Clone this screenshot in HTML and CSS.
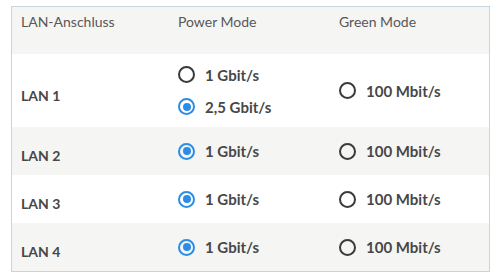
FILE: index.html
```html
<!DOCTYPE html>
<html lang="de">
<head>
    <meta charset="UTF-8">
    <title>LAN-Anschluss</title>
    <link rel="stylesheet" href="styles.css">
</head>
<body>

    <!-- LAN Port Table -->
    <div class="lan-table">
        <div class="row head">
            <div class="cell">LAN-Anschluss</div>
            <div class="cell">Power Mode</div>
            <div class="cell">Green Mode</div>
        </div>

        <div class="row tall">
            <div class="cell name">LAN 1</div>
            <div class="cell options">
                <label class="radio"><span class="dot"></span>1 Gbit/s</label>
                <label class="radio"><span class="dot checked"></span>2,5 Gbit/s</label>
            </div>
            <div class="cell options">
                <label class="radio"><span class="dot"></span>100 Mbit/s</label>
            </div>
        </div>

        <div class="row shaded">
            <div class="cell name">LAN 2</div>
            <div class="cell options">
                <label class="radio"><span class="dot checked"></span>1 Gbit/s</label>
            </div>
            <div class="cell options">
                <label class="radio"><span class="dot"></span>100 Mbit/s</label>
            </div>
        </div>

        <div class="row">
            <div class="cell name">LAN 3</div>
            <div class="cell options">
                <label class="radio"><span class="dot checked"></span>1 Gbit/s</label>
            </div>
            <div class="cell options">
                <label class="radio"><span class="dot"></span>100 Mbit/s</label>
            </div>
        </div>

        <div class="row shaded">
            <div class="cell name">LAN 4</div>
            <div class="cell options">
                <label class="radio"><span class="dot checked"></span>1 Gbit/s</label>
            </div>
            <div class="cell options">
                <label class="radio"><span class="dot"></span>100 Mbit/s</label>
            </div>
        </div>
    </div>

</body>
</html>
```
FILE: styles.css
```css
/* Global Styles */
body {
    font-family: Lato, "Open Sans", sans-serif;
    margin: 0;
    padding: 6px 0 0 11px;
    background: #ffffff;
    color: #444;
}

/* Table */
.lan-table {
    width: 477px;
    border: 1px solid #c5d6df;
}

.row {
    display: grid;
    grid-template-columns: 157px 161px 1fr;
    height: 48px;
    background: #ffffff;
}

.row.head {
    height: 47px;
    background: #f5f5f3;
    color: #585858;
    font-size: 14px;
}

.row.head .cell {
    padding-top: 6px;
}

.row.tall {
    height: 73px;
}

.row.shaded {
    background: #f5f5f3;
}

.cell {
    padding-left: 9px;
}

.cell.name {
    display: flex;
    align-items: center;
    padding-top: 9px;
    font-size: 14px;
    font-weight: bold;
    color: #474747;
}

/* Radio Options */
.options {
    display: flex;
    flex-direction: column;
    justify-content: center;
    gap: 15px;
}

.radio {
    display: flex;
    align-items: center;
    font-size: 15px;
    font-weight: bold;
    color: #474747;
    height: 17px;
}

.dot {
    flex: none;
    box-sizing: border-box;
    width: 17px;
    height: 17px;
    border: 2px solid #3a3a3a;
    border-radius: 50%;
    margin-right: 10px;
    position: relative;
}

.dot.checked {
    border-color: #2b8de3;
}

.dot.checked::after {
    content: "";
    position: absolute;
    top: 2.5px;
    left: 2.5px;
    width: 8px;
    height: 8px;
    border-radius: 50%;
    background: #2b8de3;
}
```
